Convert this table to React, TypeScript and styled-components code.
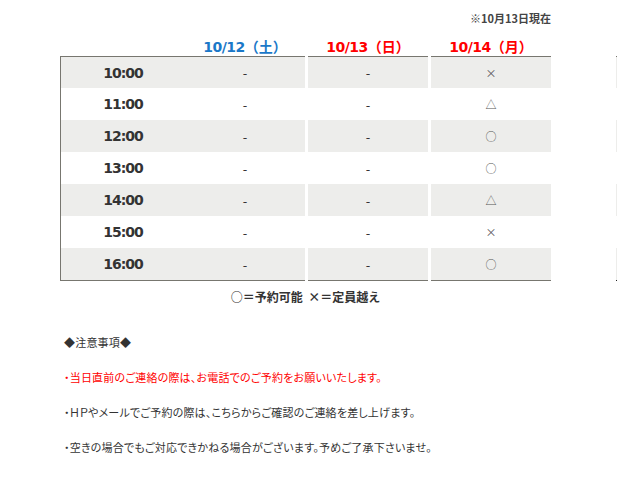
import React, { FC } from 'react'
import styled, { createGlobalStyle } from 'styled-components'

const GlobalStyle = createGlobalStyle`
  html, body {
    margin: 0;
    padding: 0;
    overflow: hidden;
    background: #ffffff;
  }
  body {
    font-family: "Noto Sans CJK JP", sans-serif;
    color: #333333;
  }
`

const Page = styled.div`
  padding: 10px 0 0 60px;
  width: 557px;
  overflow: hidden;
`

const AsOf = styled.div`
  width: 491px;
  text-align: right;
  font-size: 11px;
  font-weight: bold;
  line-height: 16px;
  color: #444444;
`

const Schedule = styled.div`
  margin-top: 10px;
  display: flex;
  flex-direction: column;
`

const HeadRow = styled.div`
  display: flex;
  height: 20px;
`

const HeadCell = styled.div<{ $w: number; $gap?: number; $color?: string }>`
  width: ${(p) => p.$w}px;
  margin-left: ${(p) => p.$gap ?? 0}px;
  flex-shrink: 0;
  text-align: center;
  font-family: "DejaVu Sans", "Noto Sans CJK JP", sans-serif;
  font-size: 14px;
  font-weight: bold;
  line-height: 20px;
  letter-spacing: -0.5px;
  color: ${(p) => p.$color ?? '#333333'};
  white-space: nowrap;
`

const Paren = styled.span`
  font-family: "Noto Sans CJK JP", sans-serif;
  letter-spacing: 0;
`

const Row = styled.div`
  display: flex;
`

const Cell = styled.div<{ $w: number; $gap?: number; $shaded: boolean; $first: boolean; $last: boolean; $lastColor?: string }>`
  box-sizing: border-box;
  width: ${(p) => p.$w}px;
  margin-left: ${(p) => p.$gap ?? 0}px;
  flex-shrink: 0;
  height: ${(p) => (p.$last ? 33 : 32)}px;
  background: ${(p) => (p.$shaded ? '#ededeb' : '#ffffff')};
  border-top: ${(p) => (p.$first ? '1px solid #77766f' : 'none')};
  border-bottom: ${(p) => (p.$last ? `1px solid ${p.$lastColor ?? '#77766f'}` : 'none')};
  display: flex;
  align-items: center;
  justify-content: center;
  font-size: 13px;
  color: #333333;
`

const TimeCell = styled(Cell)`
  border-left: 1px solid #77766f;
  font-family: "DejaVu Sans", sans-serif;
  font-size: 14px;
  font-weight: bold;
  letter-spacing: -1px;
  color: #333333;
`

const Mark = styled.span<{ $size: number }>`
  font-size: ${(p) => p.$size}px;
  color: #555555;
`

const Legend = styled.div`
  width: 491px;
  margin-top: 6px;
  text-align: center;
  font-size: 12px;
  font-weight: bold;
  line-height: 20px;
  color: #333333;
`

const Notes = styled.div`
  margin-top: 26px;
  padding-left: 4px;
  display: flex;
  flex-direction: column;
  gap: 17px;
`

const Note = styled.p<{ $red?: boolean }>`
  margin: 0;
  font-size: 11px;
  line-height: 18px;
  letter-spacing: 0.2px;
  font-feature-settings: "palt";
  color: ${(p) => (p.$red ? '#ff0000' : '#333333')};
  white-space: nowrap;
`

interface Day {
  label: string
  wd: string
  color: string
}

const days: Day[] = [
  { label: '10/12', wd: '土', color: '#1a78c8' },
  { label: '10/13', wd: '日', color: '#ff0000' },
  { label: '10/14', wd: '月', color: '#ff0000' },
]

const rows: { time: string; marks: string[] }[] = [
  { time: '10:00', marks: ['-', '-', '×'] },
  { time: '11:00', marks: ['-', '-', '△'] },
  { time: '12:00', marks: ['-', '-', '○'] },
  { time: '13:00', marks: ['-', '-', '○'] },
  { time: '14:00', marks: ['-', '-', '△'] },
  { time: '15:00', marks: ['-', '-', '×'] },
  { time: '16:00', marks: ['-', '-', '○'] },
]

const gaps = [0, 3, 3]

const markSize = (m: string) => (m === '×' ? 11 : 11)

const App: FC = () => {
  return (
    <Page>
      <GlobalStyle />
      <AsOf>※10月13日現在</AsOf>

      <Schedule>
        <HeadRow>
          <HeadCell $w={125} />
          {days.map((d, i) => (
            <HeadCell key={d.label} $w={120} $gap={gaps[i]} $color={d.color}>
              {d.label}
              <Paren>（{d.wd}）</Paren>
            </HeadCell>
          ))}
          <HeadCell $w={120} $gap={65} />
        </HeadRow>

        {rows.map((r, ri) => {
          const first = ri === 0
          const last = ri === rows.length - 1
          const shaded = ri % 2 === 0
          return (
            <Row key={r.time}>
              <TimeCell $w={125} $shaded={shaded} $first={first} $last={last}>
                {r.time}
              </TimeCell>
              {r.marks.map((m, i) => (
                <Cell key={i} $w={120} $gap={gaps[i]} $shaded={shaded} $first={first} $last={last}>
                  {m === '-' ? m : <Mark $size={markSize(m)}>{m}</Mark>}
                </Cell>
              ))}
              <Cell $w={120} $gap={65} $shaded={shaded} $first={first} $last={last} $lastColor="#222222" />
            </Row>
          )
        })}
      </Schedule>

      <Legend>○＝予約可能&nbsp;&nbsp;×＝定員越え</Legend>

      <Notes>
        <Note>◆注意事項◆</Note>
        <Note $red>・当日直前のご連絡の際は、お電話でのご予約をお願いいたします。</Note>
        <Note>・ＨＰやメールでご予約の際は、こちらからご確認のご連絡を差し上げます。</Note>
        <Note>・空きの場合でもご対応できかねる場合がございます。予めご了承下さいませ。</Note>
      </Notes>
    </Page>
  )
}

export default App
